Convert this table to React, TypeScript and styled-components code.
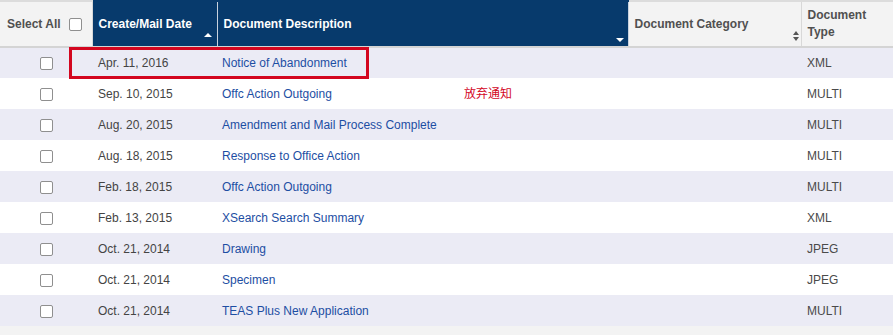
import React from 'react';
import styled, { createGlobalStyle, css } from 'styled-components';

const GlobalStyle = createGlobalStyle`
  html, body {
    margin: 0;
    padding: 0;
    background: #f3f3f3;
    font-family: "Liberation Sans", Arial, sans-serif;
  }
`;

const Wrapper = styled.div`
  position: relative;
  width: 893px;
  overflow: hidden;
`;

const Table = styled.table`
  width: 893px;
  border-collapse: collapse;
  table-layout: fixed;
  font-size: 12px;

  th,
  td {
    box-sizing: border-box;
  }
`;

const HeadCell = styled.th<{ $dark?: boolean; $w: number }>`
  position: relative;
  width: ${(p) => p.$w}px;
  height: 46px;
  padding: 0 6px;
  text-align: left;
  vertical-align: middle;
  font-weight: bold;
  font-size: 12px;
  line-height: 17px;
  border-top: 2px solid #dcdcdc;
  border-bottom: 2px solid #d4d4d4;
  border-right: 1px solid #d8d8d8;
  background: #f3f3f3;
  color: #505050;
  ${(p) =>
    p.$dark &&
    css`
      background: #073a6c;
      color: #ffffff;
      border-top-color: #073a6c;
      border-right: 1px solid #c8d2de;
    `}
`;

const SelectAll = styled.div`
  display: flex;
  align-items: center;
  gap: 8px;
  padding-left: 1px;
`;

const Box = styled.span`
  display: inline-block;
  width: 11px;
  height: 11px;
  border: 1px solid #8f8f8f;
  border-radius: 2px;
  background: #fff;
  vertical-align: middle;
`;

const SortUp = styled.span`
  position: absolute;
  right: 5px;
  bottom: 9px;
  width: 0;
  height: 0;
  border-left: 4px solid transparent;
  border-right: 4px solid transparent;
  border-bottom: 4px solid #fff;
`;

const SortDown = styled.span`
  position: absolute;
  right: 4px;
  bottom: 4px;
  width: 0;
  height: 0;
  border-left: 4px solid transparent;
  border-right: 4px solid transparent;
  border-top: 4px solid #fff;
`;

const SortBoth = styled.span`
  position: absolute;
  right: 2px;
  bottom: 5px;
  display: flex;
  flex-direction: column;
  gap: 2px;
  &::before,
  &::after {
    content: '';
    width: 0;
    height: 0;
    border-left: 3px solid transparent;
    border-right: 3px solid transparent;
  }
  &::before {
    border-bottom: 4px solid #555;
  }
  &::after {
    border-top: 4px solid #555;
  }
`;

const Row = styled.tr<{ $alt: boolean }>`
  background: ${(p) => (p.$alt ? '#ebebf5' : '#ffffff')};
  height: 31px;
`;

const Cell = styled.td<{ $center?: boolean; $tone?: 'date' | 'link' | 'type' }>`
  padding: 0 6px;
  height: 31px;
  text-align: ${(p) => (p.$center ? 'center' : 'left')};
  vertical-align: middle;
  white-space: nowrap;
  color: ${(p) =>
    p.$tone === 'link' ? '#1d4ea3' : p.$tone === 'type' ? '#4a4a4a' : '#444'};
  ${(p) =>
    p.$tone === 'link' &&
    css`
      padding-left: 5px;
    `}
`;

const Highlight = styled.div`
  position: absolute;
  left: 69px;
  top: 47px;
  width: 294px;
  height: 26px;
  border: 3px solid #d3061f;
  pointer-events: none;
`;

const Note = styled.div`
  position: absolute;
  left: 464px;
  top: 86px;
  color: #d3061f;
  font-size: 12px;
  font-family: "Noto Sans CJK SC", "Liberation Sans", sans-serif;
  line-height: 14px;
`;

const rows = [
  ['Apr. 11, 2016', 'Notice of Abandonment', 'XML'],
  ['Sep. 10, 2015', 'Offc Action Outgoing', 'MULTI'],
  ['Aug. 20, 2015', 'Amendment and Mail Process Complete', 'MULTI'],
  ['Aug. 18, 2015', 'Response to Office Action', 'MULTI'],
  ['Feb. 18, 2015', 'Offc Action Outgoing', 'MULTI'],
  ['Feb. 13, 2015', 'XSearch Search Summary', 'XML'],
  ['Oct. 21, 2014', 'Drawing', 'JPEG'],
  ['Oct. 21, 2014', 'Specimen', 'JPEG'],
  ['Oct. 21, 2014', 'TEAS Plus New Application', 'MULTI'],
];

export default function App() {
  return (
    <Wrapper>
      <GlobalStyle />
      <Table>
        <thead>
          <tr>
            <HeadCell $w={92}>
              <SelectAll>
                Select All <Box />
              </SelectAll>
            </HeadCell>
            <HeadCell $w={125} $dark>
              Create/Mail Date
              <SortUp />
            </HeadCell>
            <HeadCell $w={411} $dark>
              Document Description
              <SortDown />
            </HeadCell>
            <HeadCell $w={173}>
              Document Category
              <SortBoth />
            </HeadCell>
            <HeadCell $w={92}>
              Document
              <br />
              Type
            </HeadCell>
          </tr>
        </thead>
        <tbody>
          {rows.map(([date, desc, type], i) => (
            <Row key={i} $alt={i % 2 === 0}>
              <Cell $center>
                <Box />
              </Cell>
              <Cell $tone="date">{date}</Cell>
              <Cell $tone="link">{desc}</Cell>
              <Cell />
              <Cell $tone="type">{type}</Cell>
            </Row>
          ))}
        </tbody>
      </Table>
      <Highlight />
      <Note>放弃通知</Note>
    </Wrapper>
  );
}
